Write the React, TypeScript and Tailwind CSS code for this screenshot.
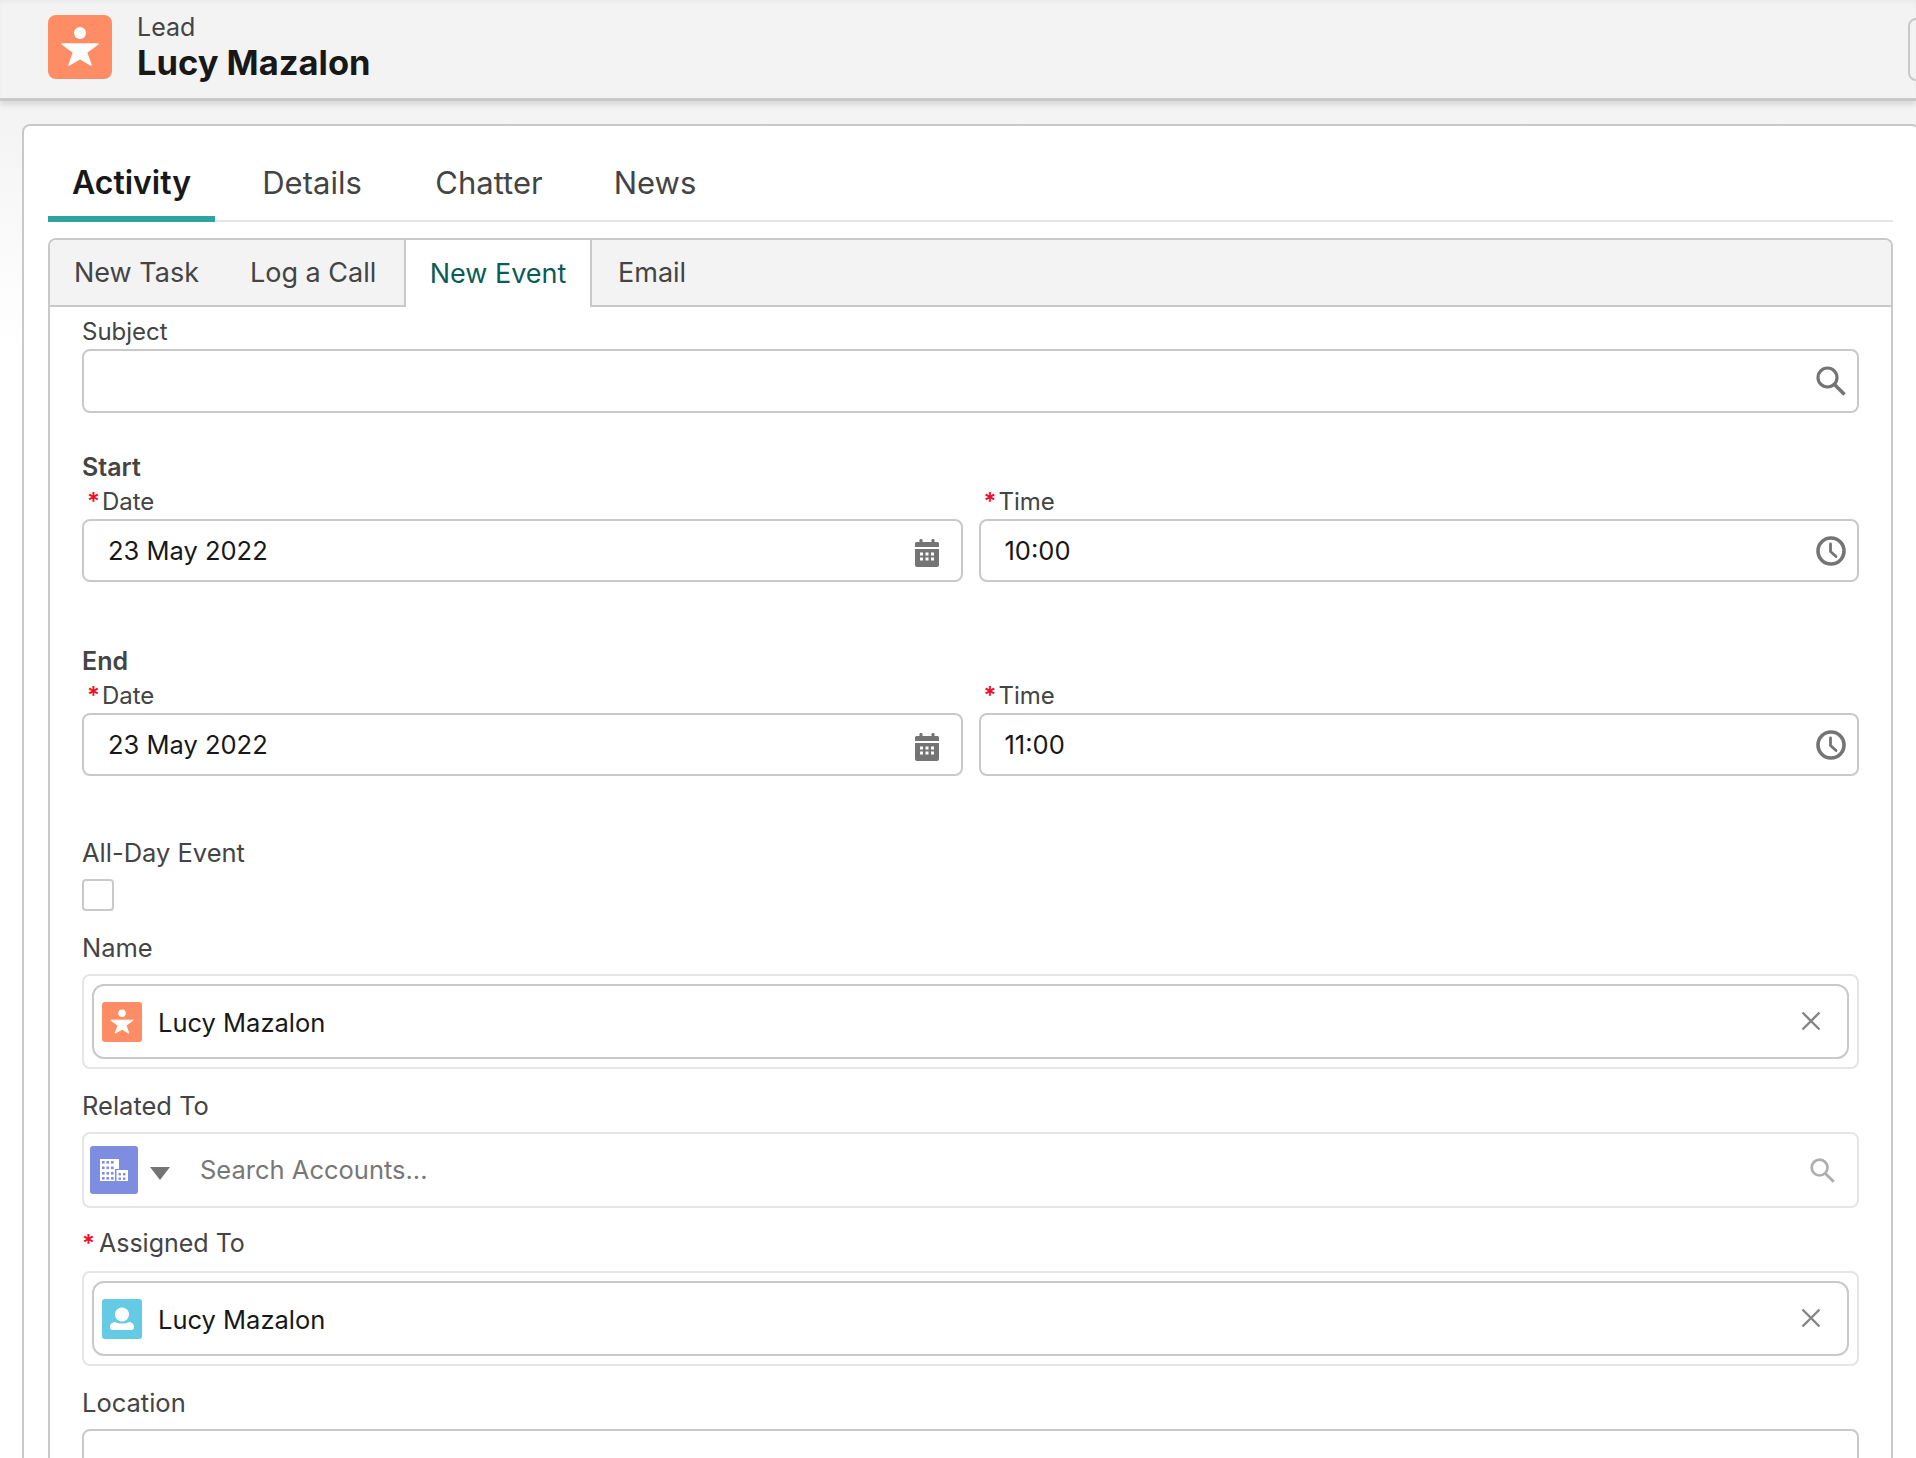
import React from 'react';

const font = { fontFamily: 'Inter, "Noto Sans", sans-serif' };

function LeadIcon({ size, radius }: { size: string; radius: string }) {
  return (
    <div className={`${size} ${radius} shrink-0 bg-[#fe8c64]`}>
      <svg viewBox="0 0 64 64" className="h-full w-full" fill="#fff">
        <circle cx="32" cy="18" r="6" />
        <path d="M14 29 L50 29 L38.500 37.500 L43 50 L32 43.500 L21 50 L25.500 37.500 Z" stroke="#fff" strokeWidth="1.500" strokeLinejoin="round" />
      </svg>
    </div>
  );
}

function ContactIcon() {
  return (
    <div className="h-[40px] w-[40px] shrink-0 rounded-[3px] bg-[#65cae4]">
      <svg viewBox="0 0 40 40" className="h-full w-full" fill="#fff">
        <circle cx="20" cy="15.5" r="7" />
        <path d="M8 27.5c0-2.5 2-4 5-4.5 2 1.2 4.500 1.500 7 1.500s5-.3 7-1.500c3 .5 5 2 5 4.500v1c0 1.500-1 2.500-2.500 2.500h-19C9 31 8 30 8 28.500z" />
      </svg>
    </div>
  );
}

function AccountIcon() {
  const tower = [15, 20.5, 26, 31];
  const small = [27, 31.5];
  return (
    <div className="h-[48px] w-[48px] shrink-0 rounded-[3px] bg-[#7f8de1]">
      <svg viewBox="0 0 48 48" className="h-full w-full">
        <rect x="10" y="13" width="19" height="22" fill="#fff" />
        {tower.map((y) =>
          [12, 16.5, 21].map((x) => <rect key={`${x}-${y}`} x={x} y={y} width="2.600" height="2.600" fill="#7f8de1" />),
        )}
        <rect x="25" y="23" width="14" height="13" fill="#7f8de1" />
        <rect x="26.500" y="24" width="11.500" height="11" fill="#fff" />
        {small.map((y) =>
          [28.500, 33].map((x) => <rect key={`${x}-${y}`} x={x} y={y} width="2.400" height="2.400" fill="#7f8de1" />),
        )}
      </svg>
    </div>
  );
}

function SearchIcon({ color, className }: { color: string; className: string }) {
  return (
    <svg viewBox="0 0 30 30" className={className} fill="none" stroke={color} strokeWidth="3.200">
      <circle cx="11.500" cy="11.500" r="9.500" />
      <path d="M18.500 18.500 L28.500 28.500" strokeWidth="3.500" />
    </svg>
  );
}

function CalendarIcon() {
  return (
    <svg viewBox="0 0 24 28" className="mt-[5px] h-[28px] w-[24px] shrink-0" fill="#747474">
      <rect x="4.500" y="0" width="3" height="5" rx="1.200" />
      <rect x="16.500" y="0" width="3" height="5" rx="1.200" />
      <path d="M1.500 3h21A1.500 1.500 0 0 1 24 4.500V8H0V4.500A1.500 1.500 0 0 1 1.500 3z" />
      <path d="M0 10h24v16a2 2 0 0 1-2 2H2a2 2 0 0 1-2-2z" />
      {[13.500, 18.500].map((y) =>
        [5, 10.500, 16].map((x) => <rect key={`${x}-${y}`} x={x} y={y} width="3" height="3" fill="#fff" />),
      )}
    </svg>
  );
}

function ClockIcon() {
  return (
    <svg viewBox="0 0 30 30" className="mt-[1px] h-[30px] w-[30px] shrink-0" fill="none" stroke="#747474">
      <circle cx="15" cy="15" r="13" strokeWidth="3.600" />
      <path d="M14.500 8 V15.500 L20 20.500" strokeWidth="2.800" strokeLinecap="round" strokeLinejoin="round" />
    </svg>
  );
}

function CloseIcon() {
  return (
    <svg viewBox="0 0 20 20" className="mb-[2px] h-[20px] w-[20px] shrink-0" stroke="#858585" strokeWidth="2.400" fill="none">
      <path d="M1.500 1.500 L18.500 18.500 M18.500 1.500 L1.500 18.500" />
    </svg>
  );
}

function Req({ gap = 'mr-[2px]' }: { gap?: string }) {
  return <span className={`${gap} text-[24px] font-semibold text-[#f00f26]`}>*</span>;
}

function Label({ children, className = '' }: { children: React.ReactNode; className?: string }) {
  return <div className={`flex h-[36px] items-center pt-[2px] text-[#444444] ${className}`}>{children}</div>;
}

function DateTimeField({ date, time }: { date: string; time: string }) {
  return (
    <div className="grid grid-cols-2 gap-x-[16px]">
      <div>
        <Label className="pl-[5px] text-[24px]"><Req />Date</Label>
        <div className="flex h-[63px] items-center justify-between rounded-[8px] border-2 border-[#c9c9c9] pl-[24px] pr-[22px] text-[25.500px] text-[#181818]">
          <span className="pt-[1px]">{date}</span>
          <CalendarIcon />
        </div>
      </div>
      <div>
        <Label className="pl-[5px] text-[24px]"><Req />Time</Label>
        <div className="flex h-[63px] items-center justify-between rounded-[8px] border-2 border-[#c9c9c9] pl-[24px] pr-[11px] text-[25.500px] text-[#181818]">
          <span className="pt-[1px]">{time}</span>
          <ClockIcon />
        </div>
      </div>
    </div>
  );
}

function Pill({ icon, name }: { icon: React.ReactNode; name: string }) {
  return (
    <div className="h-[95px] rounded-[8px] border-2 border-[#e5e5e5] p-[8px]">
      <div className="flex h-[75px] items-center gap-[16px] rounded-[12px] border-2 border-[#c9c9c9] pl-[8px] pr-[26px] text-[25.500px] text-[#181818]">
        {icon}
        <span className="flex-1 pt-[4px]">{name}</span>
        <CloseIcon />
      </div>
    </div>
  );
}

export default function App() {
  return (
    <div style={font} className="h-[1458px] w-[1916px] overflow-hidden bg-[linear-gradient(#f3f3f3_100px,#ffffff_350px)]">
      <header className="relative flex h-[101px] items-center border-b-[3px] border-[#c9c9c9] bg-[#f3f3f3] pl-[48px] shadow-[0_4px_5px_rgba(0,0,0,0.1),inset_0_3px_3px_rgba(0,0,0,0.03)]">
        <div className="-mt-[5px] flex items-center gap-[25px]">
          <LeadIcon size="h-[64px] w-[64px]" radius="rounded-[8px]" />
          <div className="pt-[3px]">
            <div className="text-[25px] leading-[30px] text-[#444444]">Lead</div>
            <div className="text-[34.500px] leading-[42px] font-bold text-[#181818]">Lucy Mazalon</div>
          </div>
        </div>
        <div className="absolute top-[18px] right-[-20px] h-[63px] w-[28px] rounded-[8px] border-2 border-[#c9c9c9]" />
      </header>

      <main className="ml-[22px] mr-[-4px] mt-[23px] h-[1400px] rounded-[8px] border-2 border-[#c9c9c9] bg-white pl-[24px] pr-[25px]">
        <nav className="flex h-[96px] items-end border-b-2 border-[#e5e5e5]">
          <div className="-mb-[2px] flex h-[72px] w-[167px] items-center justify-center border-b-[6px] border-[#2ea3a0] text-[32px] font-semibold text-[#181818]">Activity</div>
          <div className="flex h-[72px] w-[194px] items-center justify-center pb-[2px] text-[31px] text-[#444444]">Details</div>
          <div className="flex h-[72px] w-[160px] items-center justify-center pb-[2px] text-[31px] text-[#444444]">Chatter</div>
          <div className="flex h-[72px] w-[172px] items-center justify-center pb-[2px] text-[31px] text-[#444444]">News</div>
        </nav>

        <section className="mt-[16px] rounded-t-[8px] border-x-2 border-t-2 border-[#c9c9c9]">
          <div className="flex h-[67px] rounded-t-[6px] border-b-2 border-[#c9c9c9] bg-[#f3f3f3] pt-[2px] text-[27px] text-[#444444]">
            <div className="flex w-[164px] items-center pl-[24px]">New Task</div>
            <div className="flex w-[190px] items-center pl-[36px]">Log a Call</div>
            <div className="-mb-[2px] -mt-[2px] flex w-[188px] items-center justify-center border-x-2 border-[#c9c9c9] bg-white pt-[2px] text-[#0b5c57]">New Event</div>
            <div className="flex items-center pl-[26px]">Email</div>
          </div>

          <div className="pl-[32px] pr-[32px] pt-[6px]">
            <Label className="text-[24px]">Subject</Label>
            <div className="flex h-[64px] items-center justify-end rounded-[8px] border-2 border-[#c9c9c9] pr-[11px]">
              <SearchIcon color="#747474" className="h-[30px] w-[30px]" />
            </div>

            <div className="mt-[38px] flex h-[32px] items-center pt-[2px] text-[25px] font-semibold text-[#444444]">Start</div>
            <DateTimeField date="23 May 2022" time="10:00" />

            <div className="mt-[63px] flex h-[32px] items-center pt-[2px] text-[25px] font-semibold text-[#444444]">End</div>
            <DateTimeField date="23 May 2022" time="11:00" />

            <Label className="mt-[58px] text-[25.500px]">All-Day Event</Label>
            <div className="mt-[9px] h-[32px] w-[32px] rounded-[4px] border-2 border-[#c9c9c9]" />

            <Label className="mt-[18px] mb-[9px] text-[25.500px]">Name</Label>
            <Pill icon={<LeadIcon size="h-[40px] w-[40px]" radius="rounded-[3px]" />} name="Lucy Mazalon" />

            <Label className="mt-[18px] mb-[9px] text-[25.500px]">Related To</Label>
            <div className="flex h-[76px] items-center rounded-[8px] border-2 border-[#e5e5e5] pl-[6px] pr-[22px]">
              <AccountIcon />
              <svg viewBox="0 0 20 13" className="ml-[12px] mt-[7px] h-[13px] w-[20px]" fill="#747474">
                <path d="M0 0 H20 L10 13 Z" />
              </svg>
              <span className="ml-[30px] flex-1 text-[25.500px] text-[#777777]">Search Accounts...</span>
              <SearchIcon color="#aeaeae" className="h-[25px] w-[25px]" />
            </div>

            <Label className="mt-[17px] mb-[10px] text-[25px]"><Req gap="mr-[4px]" />Assigned To</Label>
            <Pill icon={<ContactIcon />} name="Lucy Mazalon" />

            <Label className="mt-[18px] mb-[9px] text-[25.500px]">Location</Label>
            <div className="h-[63px] rounded-[8px] border-2 border-[#c9c9c9]" />
          </div>
        </section>
      </main>
    </div>
  );
}
